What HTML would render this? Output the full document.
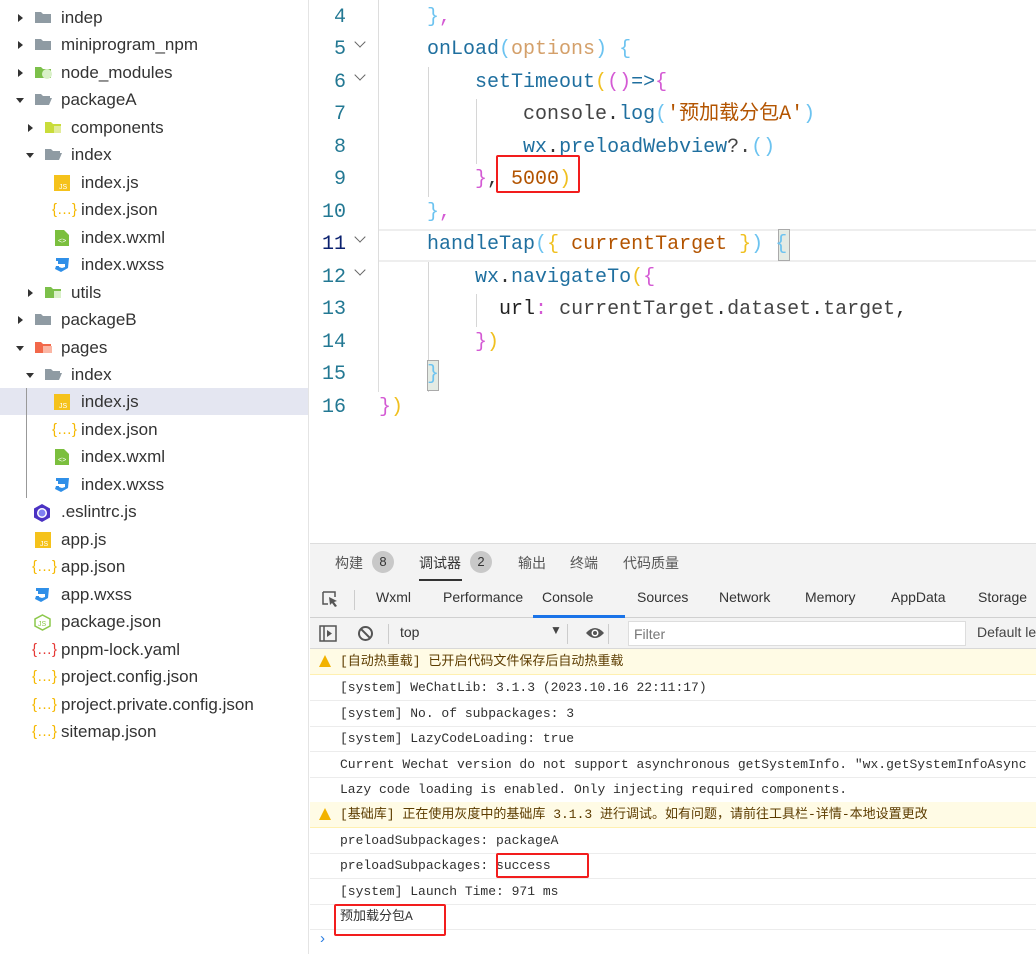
<!DOCTYPE html>
<html><head><meta charset="utf-8"><style>
*{margin:0;padding:0;box-sizing:border-box}
body{width:1036px;height:954px;background:#fff;position:relative;overflow:hidden;font-family:"Liberation Sans","Noto Sans CJK SC",sans-serif}
.side{position:absolute;left:0;top:0;width:309px;height:954px;border-right:1px solid #e4e4e4}
.row{position:absolute;left:0;width:308px;height:27px;font-size:17px;color:#333;line-height:27px}
.row span.t{position:absolute}
.arr{position:absolute;width:0;height:0}
.ar{border-left:5px solid #333;border-top:4px solid transparent;border-bottom:4px solid transparent;top:10px}
.ad{border-top:5px solid #333;border-left:4px solid transparent;border-right:4px solid transparent;top:12px}
.ic{position:absolute;top:6px}
.code{position:absolute;left:310px;top:0;width:726px;height:540px;font-family:"Liberation Mono","Noto Sans CJK SC",monospace;font-size:20px}
.ln{position:absolute;left:0;width:36px;text-align:right;color:#237893;line-height:32px}
.cl{position:absolute;left:69px;white-space:pre;line-height:32px;color:#333}
.fold{position:absolute;left:46px;width:8px;height:8px;border-right:1.3px solid #666;border-bottom:1.3px solid #666;transform:rotate(45deg)}
.f{color:#1f6f9f}.p{color:#d4a06a}.s{color:#b35400}.b1{color:#6cc3f0}.b2{color:#d45ad4}.b3{color:#f0c020}.k{color:#444}
.guide{position:absolute;width:1px;background:#d6d6d6}
.red{position:absolute;border:2px solid #f21d1d;border-radius:2px}
.panel{position:absolute;left:310px;top:543px;width:726px;height:411px;border-top:1px solid #ddd;background:#fff}
.tabs1{position:absolute;left:0;top:0;width:726px;height:38px;background:#f3f3f3;font-size:14px;color:#333}
.badge{display:inline-block;width:22px;height:22px;border-radius:11px;background:#c8c8c8;text-align:center;line-height:22px;font-size:13px;color:#333}
.tabs2{position:absolute;left:0;top:38px;width:726px;height:36px;background:#f3f3f3;border-bottom:1px solid #d0d0d0;font-size:14px;color:#333}
.tabs2 span{position:absolute;top:7px}
.bar{position:absolute;left:0;top:74px;width:726px;height:31px;background:#f3f3f3;border-bottom:1px solid #d8d8d8;font-size:14px;color:#333;white-space:nowrap}
.cr{position:absolute;left:0;width:726px;height:26px;border-bottom:1px solid #ececec;font-family:"Liberation Mono","Noto Sans CJK SC",monospace;font-size:13px;color:#303030;line-height:25px;padding-left:30px;white-space:pre;overflow:hidden}
.warn{background:#fffbe5;border-bottom:1px solid #fff0b0;color:#5c3c00}
.wi{position:absolute;left:9px;top:6px;width:0;height:0;border-left:6px solid transparent;border-right:6px solid transparent;border-bottom:12px solid #f2b200}
</style></head><body>
<div class="side">
<div class="row" style="top:4px"><i class="arr ar" style="left:18px"></i><svg class="ic" style="left:34px" width="18" height="14"><path d="M1 2h6l2 2h8v9H1z" fill="#8f9ba3"/></svg><span class="t" style="left:61px">indep</span></div>
<div class="row" style="top:31px"><i class="arr ar" style="left:18px"></i><svg class="ic" style="left:34px" width="18" height="14"><path d="M1 2h6l2 2h8v9H1z" fill="#8f9ba3"/></svg><span class="t" style="left:61px">miniprogram_npm</span></div>
<div class="row" style="top:59px"><i class="arr ar" style="left:18px"></i><svg class="ic" style="left:34px" width="18" height="14"><path d="M1 2h6l2 2h8v9H1z" fill="#7cc04a"/><circle cx="13" cy="9" r="5" fill="#d9f0c8"/></svg><span class="t" style="left:61px">node_modules</span></div>
<div class="row" style="top:86px"><i class="arr ad" style="left:16px"></i><svg class="ic" style="left:34px" width="18" height="14"><path d="M1 2h6l2 2h7v2H4l-3 7z M4 6h14l-3 7H1z" fill="#8f9ba3"/></svg><span class="t" style="left:61px">packageA</span></div>
<div class="row" style="top:114px"><i class="arr ar" style="left:28px"></i><svg class="ic" style="left:44px" width="18" height="14"><path d="M1 2h6l2 2h8v9H1z" fill="#c9dc3a"/><rect x="10" y="6" width="7" height="7" fill="#e2ec9a"/></svg><span class="t" style="left:71px">components</span></div>
<div class="row" style="top:141px"><i class="arr ad" style="left:26px"></i><svg class="ic" style="left:44px" width="18" height="14"><path d="M1 2h6l2 2h7v2H4l-3 7z M4 6h14l-3 7H1z" fill="#8f9ba3"/></svg><span class="t" style="left:71px">index</span></div>
<div class="row" style="top:169px"><svg class="ic" style="left:54px" width="16" height="16"><rect width="16" height="16" fill="#f5c21b"/><text x="5" y="14" font-size="7" fill="#fff" font-family="Liberation Sans">JS</text></svg><span class="t" style="left:81px">index.js</span></div>
<div class="row" style="top:196px"><span class="ic" style="left:52px;top:0;font-size:15px;color:#f5b800">{…}</span><span class="t" style="left:81px">index.json</span></div>
<div class="row" style="top:224px"><svg class="ic" style="left:55px" width="14" height="16"><path d="M0 0h9l5 5v11H0z" fill="#7bbf3e"/><text x="3" y="13" font-size="7" fill="#fff">&lt;&gt;</text></svg><span class="t" style="left:81px">index.wxml</span></div>
<div class="row" style="top:251px"><svg class="ic" style="left:54px" width="16" height="16"><path d="M2 1h13l-1 10-7 4-6-3 1-3h3l0 1 3 1 3-1 0-3H4l0-3h8V4H2z" fill="#2f8fe8"/></svg><span class="t" style="left:81px">index.wxss</span></div>
<div class="row" style="top:279px"><i class="arr ar" style="left:28px"></i><svg class="ic" style="left:44px" width="18" height="14"><path d="M1 2h6l2 2h8v9H1z" fill="#7cc04a"/><rect x="10" y="6" width="7" height="7" fill="#d9f0c8"/></svg><span class="t" style="left:71px">utils</span></div>
<div class="row" style="top:306px"><i class="arr ar" style="left:18px"></i><svg class="ic" style="left:34px" width="18" height="14"><path d="M1 2h6l2 2h8v9H1z" fill="#8f9ba3"/></svg><span class="t" style="left:61px">packageB</span></div>
<div class="row" style="top:334px"><i class="arr ad" style="left:16px"></i><svg class="ic" style="left:34px" width="18" height="14"><path d="M1 2h6l2 2h8v9H1z" fill="#f2684a"/><rect x="9" y="6" width="9" height="7" fill="#fbb6a4"/></svg><span class="t" style="left:61px">pages</span></div>
<div class="row" style="top:361px"><i class="arr ad" style="left:26px"></i><svg class="ic" style="left:44px" width="18" height="14"><path d="M1 2h6l2 2h7v2H4l-3 7z M4 6h14l-3 7H1z" fill="#8f9ba3"/></svg><span class="t" style="left:71px">index</span></div>
<div class="row" style="top:388px;background:#e4e6f1"><svg class="ic" style="left:54px" width="16" height="16"><rect width="16" height="16" fill="#f5c21b"/><text x="5" y="14" font-size="7" fill="#fff" font-family="Liberation Sans">JS</text></svg><span class="t" style="left:81px">index.js</span></div>
<div class="row" style="top:416px"><span class="ic" style="left:52px;top:0;font-size:15px;color:#f5b800">{…}</span><span class="t" style="left:81px">index.json</span></div>
<div class="row" style="top:443px"><svg class="ic" style="left:55px" width="14" height="16"><path d="M0 0h9l5 5v11H0z" fill="#7bbf3e"/><text x="3" y="13" font-size="7" fill="#fff">&lt;&gt;</text></svg><span class="t" style="left:81px">index.wxml</span></div>
<div class="row" style="top:471px"><svg class="ic" style="left:54px" width="16" height="16"><path d="M2 1h13l-1 10-7 4-6-3 1-3h3l0 1 3 1 3-1 0-3H4l0-3h8V4H2z" fill="#2f8fe8"/></svg><span class="t" style="left:81px">index.wxss</span></div>
<div style="position:absolute;left:26px;top:388px;width:1px;height:110px;background:#999"></div>
<div class="row" style="top:498px"><svg class="ic" style="left:33px" width="18" height="18"><polygon points="9,0 17,4.5 17,13.5 9,18 1,13.5 1,4.5" fill="#4b32c3"/><circle cx="9" cy="9" r="5" fill="#fff"/><circle cx="9" cy="9" r="3.5" fill="#8080f2"/></svg><span class="t" style="left:61px">.eslintrc.js</span></div>
<div class="row" style="top:526px"><svg class="ic" style="left:35px" width="16" height="16"><rect width="16" height="16" fill="#f5c21b"/><text x="5" y="14" font-size="7" fill="#fff" font-family="Liberation Sans">JS</text></svg><span class="t" style="left:61px">app.js</span></div>
<div class="row" style="top:553px"><span class="ic" style="left:32px;top:0;font-size:15px;color:#f5b800">{…}</span><span class="t" style="left:61px">app.json</span></div>
<div class="row" style="top:581px"><svg class="ic" style="left:34px" width="16" height="16"><path d="M2 1h13l-1 10-7 4-6-3 1-3h3l0 1 3 1 3-1 0-3H4l0-3h8V4H2z" fill="#2f8fe8"/></svg><span class="t" style="left:61px">app.wxss</span></div>
<div class="row" style="top:608px"><svg class="ic" style="left:34px" width="17" height="17"><polygon points="8.5,1 16,5 16,12 8.5,16 1,12 1,5" fill="none" stroke="#8cc84b" stroke-width="1.5"/><text x="4" y="12" font-size="7" fill="#8cc84b">JS</text></svg><span class="t" style="left:61px">package.json</span></div>
<div class="row" style="top:636px"><span class="ic" style="left:32px;top:0;font-size:15px;color:#e53935">{…}</span><span class="t" style="left:61px">pnpm-lock.yaml</span></div>
<div class="row" style="top:663px"><span class="ic" style="left:32px;top:0;font-size:15px;color:#f5b800">{…}</span><span class="t" style="left:61px">project.config.json</span></div>
<div class="row" style="top:691px"><span class="ic" style="left:32px;top:0;font-size:15px;color:#f5b800">{…}</span><span class="t" style="left:61px">project.private.config.json</span></div>
<div class="row" style="top:718px"><span class="ic" style="left:32px;top:0;font-size:15px;color:#f5b800">{…}</span><span class="t" style="left:61px">sitemap.json</span></div>
</div>

<div class="code">
<div class="guide" style="left:68px;top:0;height:392px;background:#ddd"></div>
<div class="guide" style="left:118px;top:67px;height:130px"></div>
<div class="guide" style="left:166px;top:99px;height:65px"></div>
<div class="guide" style="left:118px;top:262px;height:130px"></div>
<div class="guide" style="left:166px;top:294px;height:33px"></div>
<div style="position:absolute;left:69px;top:229px;width:657px;height:33px;border-top:2px solid #eee;border-bottom:2px solid #eee"></div>
<div style="position:absolute;left:468px;top:229px;width:12px;height:32px;background:#e4ebe4;border:1px solid #aaa"></div>
<div style="position:absolute;left:117px;top:360px;width:12px;height:31px;background:#e4ebe4;border:1px solid #aaa"></div>
<div class="ln" style="top:2px">4</div><div class="cl" style="top:2px">    <span class="b1">}</span><span class="b2">,</span></div>
<div class="ln" style="top:34px">5</div><i class="fold" style="top:38px"></i><div class="cl" style="top:34px">    <span class="f">onLoad</span><span class="b1">(</span><span class="p">options</span><span class="b1">)</span> <span class="b1">{</span></div>
<div class="ln" style="top:67px">6</div><i class="fold" style="top:71px"></i><div class="cl" style="top:67px">        <span class="f">setTimeout</span><span class="b3">(</span><span class="b2">()</span><span class="f">=&gt;</span><span class="b2">{</span></div>
<div class="ln" style="top:99px">7</div><div class="cl" style="top:99px">            <span class="k">console</span>.<span class="f">log</span><span class="b1">(</span><span class="s">'预加载分包A'</span><span class="b1">)</span></div>
<div class="ln" style="top:132px">8</div><div class="cl" style="top:132px">            <span class="f">wx</span>.<span class="f">preloadWebview</span><span class="k">?.</span><span class="b1">()</span></div>
<div class="ln" style="top:164px">9</div><div class="cl" style="top:164px">        <span class="b2">}</span>, <span class="s">5000</span><span class="b3">)</span></div>
<div class="ln" style="top:197px">10</div><div class="cl" style="top:197px">    <span class="b1">}</span><span class="b2">,</span></div>
<div class="ln" style="top:229px;color:#0b216f">11</div><i class="fold" style="top:233px"></i><div class="cl" style="top:229px">    <span class="f">handleTap</span><span class="b1">(</span><span class="b3">{</span> <span class="s">currentTarget</span> <span class="b3">}</span><span class="b1">)</span> <span class="b1">{</span></div>
<div class="ln" style="top:262px">12</div><i class="fold" style="top:266px"></i><div class="cl" style="top:262px">        <span class="f">wx</span>.<span class="f">navigateTo</span><span class="b3">(</span><span class="b2">{</span></div>
<div class="ln" style="top:294px">13</div><div class="cl" style="top:294px">          <span style="color:#222">url</span><span class="b2">:</span> <span class="k">currentTarget</span>.<span class="k">dataset</span>.<span class="k">target</span>,</div>
<div class="ln" style="top:327px">14</div><div class="cl" style="top:327px">        <span class="b2">}</span><span class="b3">)</span></div>
<div class="ln" style="top:359px">15</div><div class="cl" style="top:359px">    <span class="b1">}</span></div>
<div class="ln" style="top:392px">16</div><div class="cl" style="top:392px"><span class="b2">}</span><span class="b3">)</span></div>
<div class="red" style="left:186px;top:155px;width:84px;height:38px"></div>
</div>

<div class="panel">
<div class="tabs1">
<span style="position:absolute;left:25px;top:9px;color:#555">构建</span><span class="badge" style="position:absolute;left:62px;top:7px">8</span>
<span style="position:absolute;left:109px;top:9px">调试器</span><span class="badge" style="position:absolute;left:160px;top:7px">2</span>
<div style="position:absolute;left:109px;top:35px;width:43px;height:2px;background:#333"></div>
<span style="position:absolute;left:208px;top:9px;color:#555">输出</span>
<span style="position:absolute;left:260px;top:9px;color:#555">终端</span>
<span style="position:absolute;left:313px;top:9px;color:#555">代码质量</span>
</div>
<div class="tabs2">
<svg style="position:absolute;left:11px;top:8px" width="20" height="20"><path d="M2 2h12v5M2 2v12h5" stroke="#555" stroke-width="1.5" fill="none"/><path d="M8 7l8 4-3 1 3 4-2 1-3-4-2 2z" fill="#555"/></svg>
<div style="position:absolute;left:44px;top:8px;width:1px;height:20px;background:#ccc"></div>
<span style="left:66px">Wxml</span><span style="left:133px">Performance</span><span style="left:232px">Console</span><span style="left:327px">Sources</span><span style="left:409px">Network</span><span style="left:495px">Memory</span><span style="left:581px">AppData</span><span style="left:668px">Storage</span>
<div style="position:absolute;left:223px;top:33px;width:92px;height:3px;background:#1a73e8"></div>
</div>
<div class="bar">
<svg style="position:absolute;left:9px;top:7px" width="18" height="17"><rect x="1" y="1" width="16" height="15" fill="none" stroke="#555" stroke-width="1.5"/><path d="M5 1v15" stroke="#555" stroke-width="1.5"/><path d="M8 5l5 3.5-5 3.5z" fill="#555"/></svg>
<svg style="position:absolute;left:47px;top:7px" width="17" height="17"><circle cx="8.5" cy="8.5" r="6.5" fill="none" stroke="#555" stroke-width="2"/><path d="M4 4l9 9" stroke="#555" stroke-width="2"/></svg>
<div style="position:absolute;left:78px;top:6px;width:1px;height:20px;background:#ccc"></div>
<span style="position:absolute;left:90px;top:6px">top</span>
<span style="position:absolute;left:240px;top:5px;font-size:12px;color:#444">▼</span>
<div style="position:absolute;left:257px;top:6px;width:1px;height:20px;background:#ccc"></div>
<svg style="position:absolute;left:275px;top:8px" width="20" height="14"><path d="M1 7Q10-3 19 7Q10 17 1 7z" fill="#555"/><circle cx="10" cy="7" r="3.5" fill="#fff"/><circle cx="10" cy="7" r="2" fill="#555"/></svg>
<div style="position:absolute;left:298px;top:6px;width:1px;height:20px;background:#ccc"></div>
<div style="position:absolute;left:318px;top:3px;width:338px;height:25px;background:#fff;border:1px solid #ddd;color:#777;padding:4px 5px">Filter</div>
<span style="position:absolute;left:667px;top:6px;color:#444">Default levels</span>
</div>
<div class="cr warn" style="top:105px"><i class="wi"></i>[自动热重载] 已开启代码文件保存后自动热重载</div>
<div class="cr" style="top:131px">[system] WeChatLib: 3.1.3 (2023.10.16 22:11:17)</div>
<div class="cr" style="top:157px">[system] No. of subpackages: 3</div>
<div class="cr" style="top:182px">[system] LazyCodeLoading: true</div>
<div class="cr" style="top:208px">Current Wechat version do not support asynchronous getSystemInfo. "wx.getSystemInfoAsync</div>
<div class="cr" style="top:233px">Lazy code loading is enabled. Only injecting required components.</div>
<div class="cr warn" style="top:258px"><i class="wi"></i>[基础库] 正在使用灰度中的基础库 3.1.3 进行调试。如有问题，请前往工具栏-详情-本地设置更改</div>
<div class="cr" style="top:284px">preloadSubpackages: packageA</div>
<div class="cr" style="top:309px">preloadSubpackages: success</div>
<div class="cr" style="top:335px">[system] Launch Time: 971 ms</div>
<div class="cr" style="top:360px">预加载分包A</div>
<div style="position:absolute;left:10px;top:386px;color:#2a7de1;font-size:15px">›</div>
<div class="red" style="left:186px;top:309px;width:93px;height:25px"></div>
<div class="red" style="left:24px;top:360px;width:112px;height:32px"></div>
</div>
</body></html>
